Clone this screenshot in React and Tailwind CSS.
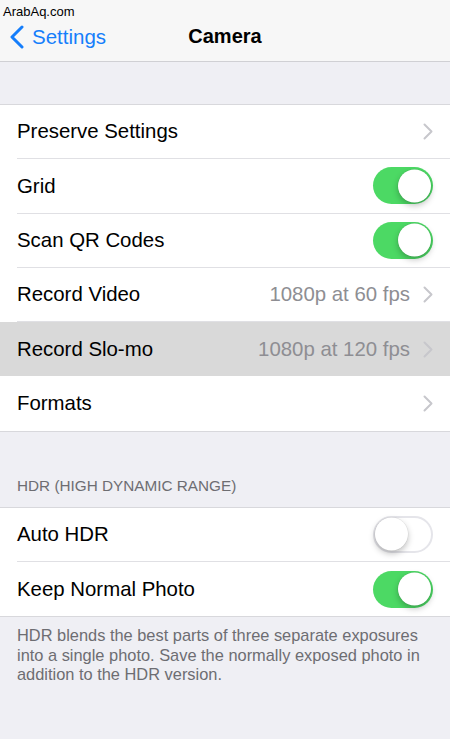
import React, { useState } from 'react';

const font = { fontFamily: '"Liberation Sans", Arial, sans-serif' };

const Chevron = ({ className = '' }) => (
  <svg width="10" height="17" viewBox="0 0 10 17" className={className}>
    <path d="M1.5 1.5 L8.5 8.5 L1.5 15.5" fill="none" stroke="#c7c7cc" strokeWidth="2" strokeLinecap="round" strokeLinejoin="round" />
  </svg>
);

const Toggle = ({ on, onChange }) => (
  <button
    onClick={onChange}
    className={`relative w-[60px] h-[37px] rounded-full transition-colors ${
      on ? 'bg-[#4cd964]' : 'bg-white border-2 border-[#e5e5ea]'
    }`}
  >
    <span
      className={`absolute top-1/2 -translate-y-1/2 w-[33px] h-[33px] rounded-full bg-white shadow-[0_3px_6px_rgba(0,0,0,0.25),0_0_0_0.5px_rgba(0,0,0,0.08)] ${
        on ? 'right-[2px]' : 'left-0'
      }`}
    />
  </button>
);

const Row = ({ label, value, chevron, toggle, highlighted, last }) => (
  <div className={`flex pl-[17px] ${highlighted ? 'bg-[#d9d9d9]' : 'bg-white'}`}>
    <div
      className={`flex-1 flex items-center h-[54.3px] pr-[17px] ${
        last || highlighted ? '' : 'border-b border-[#e0e0e4]'
      }`}
    >
      <span className="text-[20.4px] text-black flex-1">{label}</span>
      {value && <span className="text-[20.4px] text-[#8e8e93] mr-[13px]">{value}</span>}
      {chevron && <Chevron />}
      {toggle}
    </div>
  </div>
);

const App = () => {
  const [grid, setGrid] = useState(true);
  const [qr, setQr] = useState(true);
  const [autoHdr, setAutoHdr] = useState(false);
  const [keepNormal, setKeepNormal] = useState(true);

  return (
    <div className="w-[450px] h-[739px] bg-[#efeff4] overflow-hidden" style={font}>
      {/* Nav bar */}
      <div className="relative h-[62px] bg-[#f7f7f7] border-b border-[#d0d0d4]">
        <span className="absolute left-[3px] top-[2px] text-[13px] text-black">ArabAq.com</span>
        <div className="absolute left-[9px] top-[22px] flex items-center">
          <svg width="16" height="24" viewBox="0 0 16 24">
            <path d="M13 2 L3 12 L13 22" fill="none" stroke="#157efb" strokeWidth="3" strokeLinecap="round" strokeLinejoin="round" />
          </svg>
          <span className="ml-[7px] text-[20.5px] text-[#157efb]">Settings</span>
        </div>
        <div className="absolute inset-x-0 top-[21px] text-center text-[20px] font-bold text-black">Camera</div>
      </div>

      <div className="h-[42px]" />

      <div className="border-y border-[#d8d8dc]">
        <Row label="Preserve Settings" chevron />
        <Row label="Grid" toggle={<Toggle on={grid} onChange={() => setGrid(!grid)} />} />
        <Row label="Scan QR Codes" toggle={<Toggle on={qr} onChange={() => setQr(!qr)} />} />
        <Row label="Record Video" value="1080p at 60 fps" chevron />
        <Row label="Record Slo-mo" value="1080p at 120 fps" chevron highlighted />
        <Row label="Formats" chevron last />
      </div>

      <div className="h-[75px] flex items-end pl-[17px] pb-[9px]">
        <span className="text-[15.3px] text-[#6d6d72]">HDR (HIGH DYNAMIC RANGE)</span>
      </div>

      <div className="border-y border-[#d8d8dc]">
        <Row label="Auto HDR" toggle={<Toggle on={autoHdr} onChange={() => setAutoHdr(!autoHdr)} />} />
        <Row
          label="Keep Normal Photo"
          last
          toggle={<Toggle on={keepNormal} onChange={() => setKeepNormal(!keepNormal)} />}
        />
      </div>

      <p className="px-[17px] pt-[9px] text-[16.4px] leading-[19.5px] text-[#6d6d72]">
        HDR blends the best parts of three separate exposures into a single photo. Save the normally exposed photo in
        addition to the HDR version.
      </p>
    </div>
  );
};

export default App;
